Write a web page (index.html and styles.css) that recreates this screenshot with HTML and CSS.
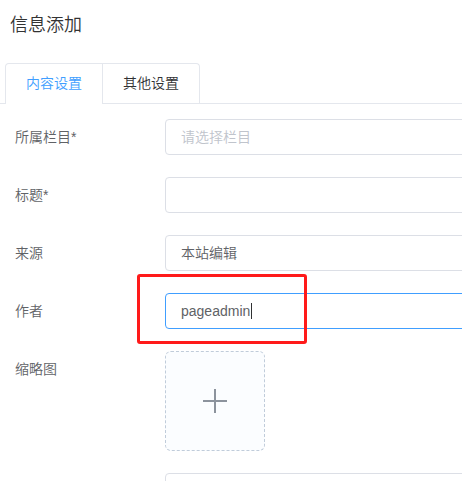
FILE: index.html
```html
<!DOCTYPE html>
<html lang="zh-CN">
<head>
<meta charset="utf-8">
<title>信息添加</title>
<link rel="stylesheet" href="styles.css">
</head>
<body>
<div class="page">
  <h1 class="title">信息添加</h1>
  <div class="tabs-bar">
    <div class="tabs-nav">
      <div class="tab active">内容设置</div>
      <div class="tab">其他设置</div>
    </div>
  </div>
  <div class="form">
    <div class="row">
      <div class="label">所属栏目*</div>
      <div class="control"><div class="input placeholder">请选择栏目</div></div>
    </div>
    <div class="row">
      <div class="label">标题*</div>
      <div class="control"><div class="input"></div></div>
    </div>
    <div class="row">
      <div class="label">来源</div>
      <div class="control"><div class="input">本站编辑</div></div>
    </div>
    <div class="row">
      <div class="label">作者</div>
      <div class="control"><div class="input focused"><span class="caret">pageadmin</span></div></div>
    </div>
    <div class="row">
      <div class="label">缩略图</div>
      <div class="control">
        <div class="upload">
          <svg width="26" height="26" viewBox="0 0 26 26"><path d="M13 1v24M1 13h24" stroke="#8c939d" stroke-width="2" fill="none"/></svg>
        </div>
      </div>
    </div>
    <div class="row">
      <div class="label"></div>
      <div class="control"><div class="input"></div></div>
    </div>
  </div>
  <div class="highlight"></div>
</div>
</body>
</html>
```
FILE: styles.css
```css
html, body {
  margin: 0;
  padding: 0;
  background: #fff;
  overflow: hidden;
}
body {
  font-family: "Liberation Sans", "Noto Sans CJK SC", sans-serif;
  font-weight: 350;
  color: #606266;
  font-size: 14px;
}
.page {
  position: relative;
  width: 640px;
}
.title {
  margin: 0;
  padding-left: 10px;
  height: 50px;
  line-height: 50px;
  font-size: 18px;
  font-weight: 350;
  color: #333;
}
.tabs-bar {
  margin-top: 13px;
  padding-left: 5px;
  border-bottom: 1px solid #e4e7ed;
  display: flex;
}
.tabs-nav {
  display: flex;
  border: 1px solid #e4e7ed;
  border-bottom: none;
  border-radius: 4px 4px 0 0;
  margin-bottom: -1px;
}
.tab {
  height: 39px;
  line-height: 39px;
  padding: 0 20px;
  border-bottom: 1px solid #e4e7ed;
  color: #303133;
  font-size: 14px;
}
.tab + .tab {
  border-left: 1px solid #e4e7ed;
}
.tab.active {
  color: #409eff;
  border-bottom-color: #fff;
}
.form {
  padding: 15px 0 0 15px;
}
.row {
  display: flex;
  margin-bottom: 22px;
}
.label {
  width: 150px;
  flex: none;
  line-height: 36px;
  color: #606266;
}
.control {
  flex: 1;
}
.input {
  box-sizing: border-box;
  height: 36px;
  line-height: 34px;
  border: 1px solid #dcdfe6;
  border-radius: 4px;
  padding: 0 15px;
  color: #606266;
}
.input.placeholder {
  color: #c0c4cc;
}
.input.focused {
  border-color: #409eff;
}
.caret {
  border-right: 1px solid #303133;
  padding-right: 1px;
}
.upload {
  box-sizing: border-box;
  width: 100px;
  height: 100px;
  border: 1px dashed #c0ccda;
  border-radius: 6px;
  background: #fbfdff;
  display: flex;
  align-items: center;
  justify-content: center;
}
.highlight {
  position: absolute;
  left: 137px;
  top: 274px;
  width: 164px;
  height: 64px;
  border: 3px solid #ff1a1a;
  border-radius: 3px;
}
```
